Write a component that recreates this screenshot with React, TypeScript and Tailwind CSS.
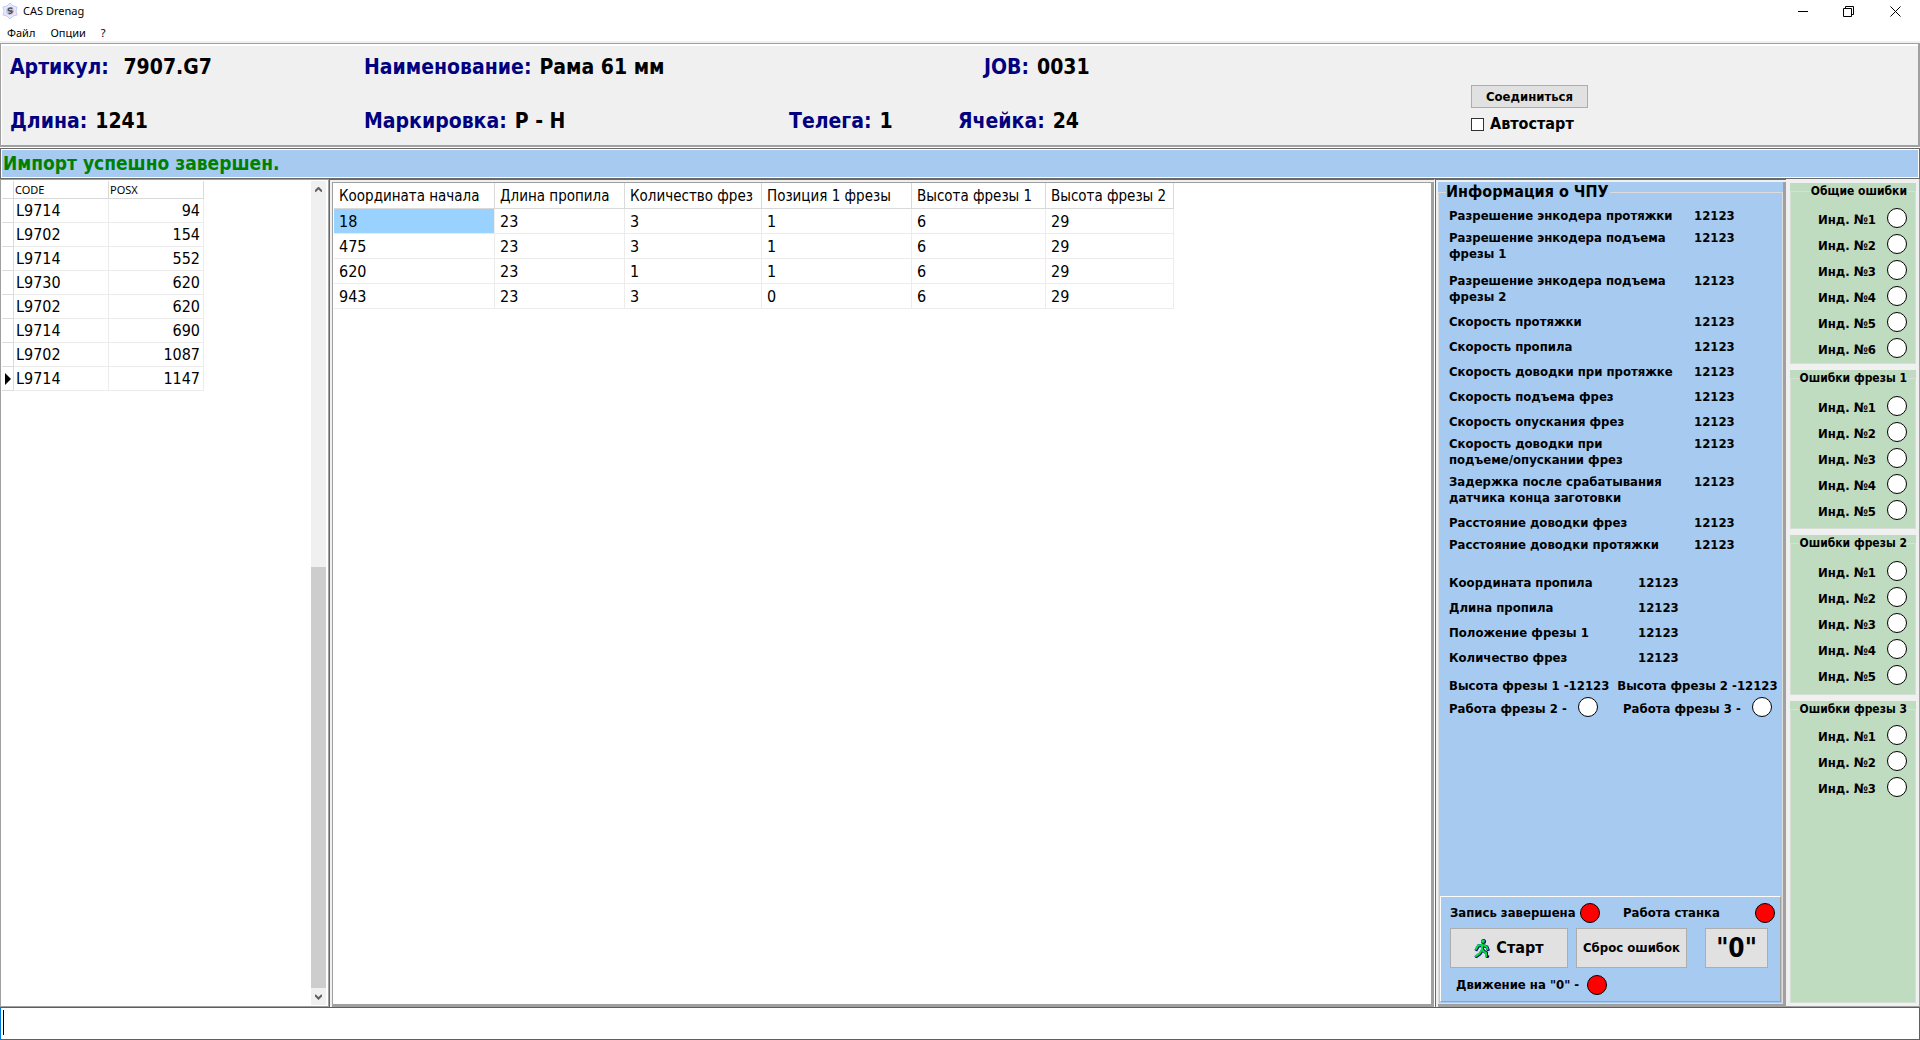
import React from "react";

type Reading = { label: string; value: string; height: string };

const codes = [
  { code: "L9714", pos: 94 },
  { code: "L9702", pos: 154 },
  { code: "L9714", pos: 552 },
  { code: "L9730", pos: 620 },
  { code: "L9702", pos: 620 },
  { code: "L9714", pos: 690 },
  { code: "L9702", pos: 1087 },
  { code: "L9714", pos: 1147 },
];

const cutColumns = [
  { title: "Координата начала", width: "w-[161px]" },
  { title: "Длина пропила", width: "w-[130px]" },
  { title: "Количество фрез", width: "w-[137px]" },
  { title: "Позиция 1 фрезы", width: "w-[150px]" },
  { title: "Высота фрезы 1", width: "w-[134px]" },
  { title: "Высота фрезы 2", width: "w-[128px]" },
];

const cuts = [
  [18, 23, 3, 1, 6, 29],
  [475, 23, 3, 1, 6, 29],
  [620, 23, 1, 1, 6, 29],
  [943, 23, 3, 0, 6, 29],
];

const settings: Reading[] = [
  { label: "Разрешение энкодера протяжки", value: "12123", height: "h-[22px]" },
  { label: "Разрешение энкодера подъема фрезы 1", value: "12123", height: "h-[43px]" },
  { label: "Разрешение энкодера подъема фрезы 2", value: "12123", height: "h-[41px]" },
  { label: "Скорость протяжки", value: "12123", height: "h-[25px]" },
  { label: "Скорость пропила", value: "12123", height: "h-[25px]" },
  { label: "Скорость доводки при протяжке", value: "12123", height: "h-[25px]" },
  { label: "Скорость подъема фрез", value: "12123", height: "h-[25px]" },
  { label: "Скорость опускания фрез", value: "12123", height: "h-[22px]" },
  { label: "Скорость доводки при\nподъеме/опускании фрез", value: "12123", height: "h-[38px]" },
  { label: "Задержка после срабатывания датчика конца заготовки", value: "12123", height: "h-[41px]" },
  { label: "Расстояние доводки фрез", value: "12123", height: "h-[22px]" },
  { label: "Расстояние доводки протяжки", value: "12123", height: "h-[38px]" },
];

const current: Reading[] = [
  { label: "Координата пропила", value: "12123", height: "h-[25px]" },
  { label: "Длина пропила", value: "12123", height: "h-[25px]" },
  { label: "Положение фрезы 1", value: "12123", height: "h-[25px]" },
  { label: "Количество фрез", value: "12123", height: "h-[28px]" },
];

function Lamp({ on = false }: { on?: boolean }) {
  return (
    <span
      className={`block size-5 shrink-0 rounded-full border border-black ${on ? "bg-[#ff0000]" : "bg-white"}`}
    />
  );
}

function Field({ label, value, width = "" }: { label: string; value: string; width?: string }) {
  return (
    <div className={`flex gap-2 whitespace-pre ${width}`}>
      <span className="text-[#000080]">{label}</span>
      <span>{value}</span>
    </div>
  );
}

function AppIcon() {
  return (
    <svg viewBox="0 0 16 16" className="size-4">
      <path d="M8 0 L11 3 L15 4 L14 8 L15 12 L11 13 L8 16 L5 13 L1 12 L2 8 L1 4 L5 3 Z" fill="#e8eafc" stroke="#c6c9f4" />
      <circle cx="8" cy="8" r="4" fill="#c3c9dc" />
      <path d="M10.500 5.500 C8 4.500 5.500 5.500 6.500 7.500 L9.500 8.500 C10.500 10 8 11 6.500 10" fill="none" stroke="#3f5a66" strokeWidth="1.500" />
      <path d="M8.500 7.500 L11 9" stroke="#b3404a" strokeWidth="1.500" />
    </svg>
  );
}

function Walker() {
  return (
    <svg viewBox="0 0 16 19" className="h-[19px] w-4">
      <g strokeLinejoin="miter" strokeLinecap="square" fill="none">
        <g stroke="#000080" strokeWidth="3">
          <path d="M8.500 6.500 L8.500 11 L12.500 14 L12.500 17 L13.500 17.500" />
          <path d="M8.500 11 L6 15 L2.500 17.500" />
          <path d="M8 6.500 L4.500 7 L2.500 10.500" />
          <path d="M9 6.500 L13 8 L14 10.500" />
        </g>
        <circle cx="9.500" cy="2.500" r="2.500" fill="#000080" />
        <g stroke="#00e040" strokeWidth="2">
          <path d="M8 6 L8 11 L12 14 L12 17" />
          <path d="M8 11 L5.500 14.500 L2 17" />
          <path d="M8 6 L4 6.500 L2 10" />
          <path d="M8.500 6 L12.500 7.500 L13.500 10" />
        </g>
        <circle cx="9" cy="2.200" r="1.800" fill="#00e040" />
      </g>
    </svg>
  );
}

function TitleBar() {
  return (
    <header className="bg-white font-['Noto_Sans',sans-serif] text-[11px]">
      <div className="flex h-[22px] items-center">
        <div className="flex flex-1 items-center gap-[5px] pl-0.5">
          <AppIcon />
          <h1>CAS Drenag</h1>
        </div>
        <button aria-label="Свернуть" className="flex h-full w-[45px] items-center justify-center">
          <svg viewBox="0 0 11 11" className="size-[11px]"><path d="M0 5.500 H10" stroke="#000" /></svg>
        </button>
        <button aria-label="Восстановить" className="flex h-full w-[45px] items-center justify-center">
          <svg viewBox="0 0 11 11" className="size-[11px]" fill="none" stroke="#000"><path d="M0.500 2.500 H8.500 V10.500 H0.500 Z M2.500 2.500 V0.500 H10.500 V8.500 H8.500" /></svg>
        </button>
        <button aria-label="Закрыть" className="flex h-full w-[49px] items-center justify-center">
          <svg viewBox="0 0 11 11" className="size-[11px]" stroke="#000"><path d="M0.500 0.500 L10.500 10.500 M10.500 0.500 L0.500 10.500" /></svg>
        </button>
      </div>
      <nav className="flex h-[19px] items-center gap-[15px] pt-[3px] pl-[7px]">
        <button>Файл</button>
        <button>Опции</button>
        <button>?</button>
      </nav>
    </header>
  );
}

function JobHeader() {
  return (
    <section className="mt-0.5 flex h-[105px] border-b border-white">
      <div className="flex flex-1 border border-b-2 border-r-2 border-[#a0a0a0]">
        <div className="flex flex-1 border-l border-t-2 border-white">
          <div className="flex flex-1 flex-col gap-[30px] pt-[9px] pl-2 text-[21px] leading-6 font-bold">
            <div className="flex">
              <Field label="Артикул: " value="7907.G7" width="w-[354px]" />
              <Field label="Наименование:" value="Рама 61 мм" width="w-[620px]" />
              <Field label="JOB:" value="0031" />
            </div>
            <div className="flex">
              <Field label="Длина:" value="1241" width="w-[354px]" />
              <Field label="Маркировка:" value="Р - Н" width="w-[425px]" />
              <Field label="Телега:" value="1" width="w-[169px]" />
              <Field label="Ячейка:" value="24" />
            </div>
          </div>
          <div className="flex w-[447px] flex-col items-start gap-1.5 pt-[39px]">
            <button className="h-[23px] w-[117px] border border-[#adadad] bg-[#e1e1e1] text-[13px] leading-4 font-bold">
              Соединиться
            </button>
            <label className="flex h-5 items-center gap-1.5 text-base leading-5 font-bold">
              <input type="checkbox" className="size-[13px] appearance-none border border-[#333] bg-white" />
              Автостарт
            </label>
          </div>
        </div>
      </div>
    </section>
  );
}

function CodeList() {
  return (
    <section className="flex w-[329px] justify-between border border-[#a0a0a0] bg-white py-px pr-0.5 pl-px">
      <table className="w-[202px] table-fixed border-separate border-spacing-0 self-start text-base leading-5">
        <thead>
          <tr className="h-[18px] text-left font-['Noto_Sans',sans-serif] text-[11px] leading-4">
            <th className="w-3 border-r border-b border-[#d9d9d9] p-0" />
            <th className="w-[95px] border-r border-b border-[#d9d9d9] p-0 pl-px font-normal">CODE</th>
            <th className="w-[95px] border-r border-b border-[#d9d9d9] p-0 pl-px font-normal">POSX</th>
          </tr>
        </thead>
        <tbody>
          {codes.map((row, i) => (
            <tr key={i} className="h-6">
              <td className="border-r border-b border-[#dcdcdc] p-0">
                {i === codes.length - 1 && (
                  <svg viewBox="0 0 6 12" className="ml-[3px] h-3 w-1.5"><path d="M0 0 L6 6 L0 12 Z" /></svg>
                )}
              </td>
              <td className="border-r border-b border-[#ececec] p-0 pt-px pl-0.5">{row.code}</td>
              <td className="border-r border-b border-[#ececec] p-0 pt-px pr-[3px] text-right">{row.pos}</td>
            </tr>
          ))}
        </tbody>
      </table>
      <div className="flex w-[15px] flex-col bg-[#f0f0f0]">
        <button aria-label="Вверх" className="flex h-[17px] items-center justify-center">
          <svg viewBox="0 0 7 6" className="h-1.5 w-[7px]" fill="none" stroke="#606060" strokeWidth="2"><path d="M0 4.500 L3.500 1 L7 4.500" /></svg>
        </button>
        <div className="flex-[369]" />
        <div className="flex-[421] bg-[#cdcdcd]" />
        <button aria-label="Вниз" className="flex h-[17px] items-center justify-center">
          <svg viewBox="0 0 7 6" className="h-1.5 w-[7px]" fill="none" stroke="#606060" strokeWidth="2"><path d="M0 1 L3.500 4.500 L7 1" /></svg>
        </button>
      </div>
    </section>
  );
}

function CutTable() {
  return (
    <section className="flex flex-1 border-t border-r border-l border-t-[#696969] border-r-white border-l-[#696969] bg-[#f0f0f0] pt-0.5 pl-0.5">
      <div className="flex-1 border border-r-[3px] border-b-[3px] border-[#a0a0a0] bg-white pl-px">
        <table className="w-[840px] table-fixed border-separate border-spacing-0 text-base leading-5">
          <thead>
            <tr className="h-[26px] text-left text-[15px]">
              {cutColumns.map((c) => (
                <th key={c.title} className={`border-r border-b border-[#d9d9d9] p-0 pt-px pl-[5px] font-normal whitespace-nowrap ${c.width}`}>
                  {c.title}
                </th>
              ))}
            </tr>
          </thead>
          <tbody>
            {cuts.map((row, r) => (
              <tr key={r} className="h-[25px]">
                {row.map((v, c) => (
                  <td key={c} className={`border-r border-b border-[#ececec] bg-clip-padding p-0 pt-px pl-[5px] ${r === 0 && c === 0 ? "bg-[#99d1ff]" : ""}`}>
                    {v}
                  </td>
                ))}
              </tr>
            ))}
          </tbody>
        </table>
      </div>
    </section>
  );
}

function Readings({ items, width }: { items: Reading[]; width: string }) {
  return (
    <dl>
      {items.map((r) => (
        <div key={r.label} className={`flex ${r.height}`}>
          <dt className={`whitespace-pre-line ${width}`}>{r.label}</dt>
          <dd>{r.value}</dd>
        </div>
      ))}
    </dl>
  );
}

function CncInfo() {
  return (
    <section className="flex w-[351px] border-t border-l border-[#696969] bg-[#f0f0f0] pt-0.5 pl-0.5">
      <div className="flex flex-1 border-r-[3px] border-b-[3px] border-[#a0a0a0] bg-[#a6caf0]">
        <fieldset className="flex w-full min-w-0 flex-col border border-[#dcdcdc] text-[13px] leading-4 font-bold">
          <legend className="ml-[7px] pr-px text-base leading-5">Информация о ЧПУ</legend>
          <div className="flex h-full flex-col justify-between">
            <div className="pt-1.5 pl-2.5">
              <Readings items={settings} width="w-[245px]" />
              <Readings items={current} width="w-[189px]" />
              <div className="flex h-[19px] gap-2 whitespace-nowrap">
                <span>Высота фрезы 1 -12123</span>
                <span>Высота фрезы 2 -12123</span>
              </div>
              <div className="flex h-5 items-end">
                <span className="w-[129px]">Работа фрезы 2 -</span>
                <Lamp />
                <span className="ml-[25px] w-[129px]">Работа фрезы 3 -</span>
                <Lamp />
              </div>
            </div>
            <div className="mx-px mb-px flex h-[106px] flex-col border border-t-white border-r-[#a0a0a0] border-b-[#a0a0a0] border-l-white pl-[9px]">
              <div className="flex h-[31px] items-center">
                <span className="w-[130px] whitespace-nowrap">Запись завершена</span>
                <Lamp on />
                <span className="ml-[23px] w-[132px]">Работа станка</span>
                <Lamp on />
              </div>
              <div className="flex">
                <button className="flex h-10 w-[118px] items-center justify-center gap-1.5 border border-[#adadad] bg-[#e1e1e1] text-base">
                  <Walker />
                  Старт
                </button>
                <button className="ml-2 h-10 w-[111px] border border-[#adadad] bg-[#e1e1e1] whitespace-nowrap">Сброс ошибок</button>
                <button className="ml-[18px] h-10 w-[63px] border border-[#adadad] bg-[#e1e1e1] text-[26px]">"0"</button>
              </div>
              <div className="flex flex-1 items-center pl-1.5">
                <span className="w-[131px] whitespace-nowrap">Движение на "0" -</span>
                <Lamp on />
              </div>
            </div>
          </div>
        </fieldset>
      </div>
    </section>
  );
}

function ErrorGroup({ title, count, box, list }: { title: string; count: number; box: string; list: string }) {
  return (
    <div className={`flex bg-[#c0dcc0] ${box}`}>
      <fieldset className="w-full min-w-0 border border-[#d6dfd6] pr-2 text-[13px] leading-4 font-bold">
        <legend className="ml-auto text-xs leading-4 whitespace-nowrap">{title}</legend>
        <ul className={`flex flex-col gap-1.5 ${list}`}>
          {Array.from({ length: count }, (_, i) => (
            <li key={i} className="flex items-end justify-end gap-[11px]">
              <span>Инд. №{i + 1}</span>
              <Lamp />
            </li>
          ))}
        </ul>
      </fieldset>
    </div>
  );
}

function Errors() {
  return (
    <aside className="flex w-[134px] flex-col gap-1.5 border-r border-b border-[#a0a0a0] bg-[#f0f0f0] pt-1 pr-[3px] pb-[3px] pl-1">
      <ErrorGroup title="Общие ошибки" count={6} box="h-[181px]" list="pt-[9px]" />
      <ErrorGroup title="Ошибки фрезы 1" count={5} box="h-[159px]" list="pt-2.5" />
      <ErrorGroup title="Ошибки фрезы 2" count={5} box="h-[160px]" list="pt-2.5" />
      <ErrorGroup title="Ошибки фрезы 3" count={3} box="flex-1" list="pt-2" />
    </aside>
  );
}

export default function App() {
  return (
    <div className="flex h-screen flex-col bg-[#f0f0f0] font-['DejaVu_Sans_Condensed','Noto_Sans',sans-serif] text-black">
      <TitleBar />
      <JobHeader />
      <p className="h-[31px] border border-[#696969] text-[19px] font-bold">
        <span className="block h-full border border-white bg-[#a6caf0] pl-px leading-[27px] text-[#008000]">Импорт успешно завершен.</span>
      </p>
      <main className="flex min-h-0 flex-1">
        <CodeList />
        <CutTable />
        <CncInfo />
        <Errors />
      </main>
      <div className="flex h-[33px] border border-[#0078d7] bg-white pt-0.5 pb-1 pl-0.5">
        <span className="w-px bg-black" />
        <input aria-label="Команда" className="flex-1 px-1 text-xl outline-none" />
      </div>
    </div>
  );
}
